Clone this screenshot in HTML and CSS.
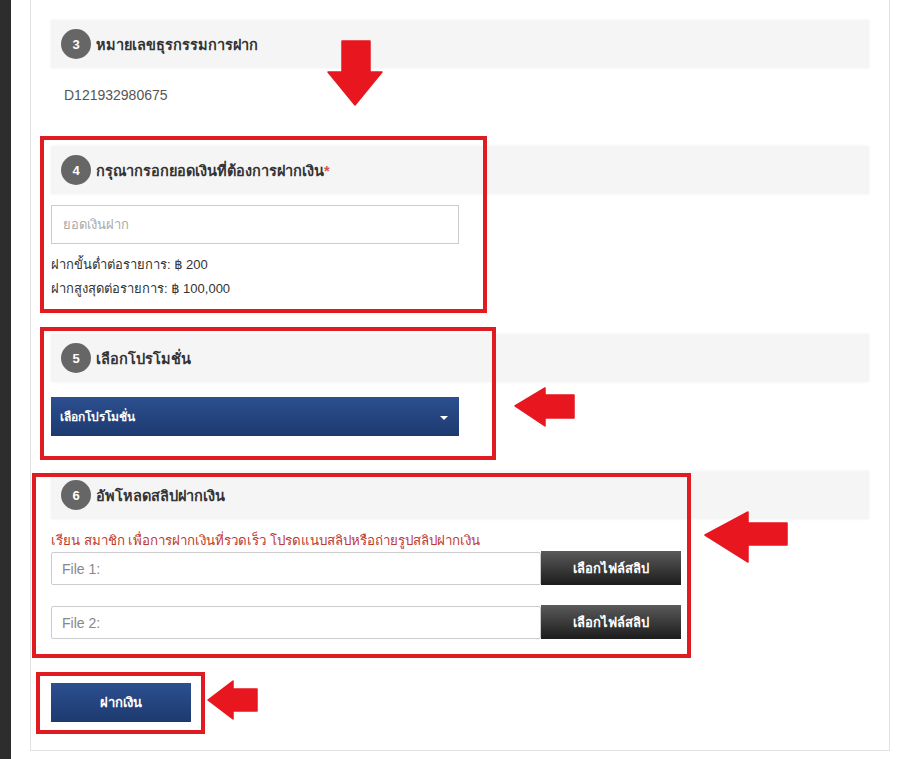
FILE: index.html
```html
<!DOCTYPE html>
<html lang="th">
<head>
<meta charset="utf-8">
<title>ฝากเงิน</title>
<link rel="stylesheet" href="styles.css">
</head>
<body>
<div class="page">
  <div class="sidebar"></div>
  <div class="main">
    <div class="card">
      <section class="sec sec3">
        <div class="sec-head"><span class="badge">3</span><span class="sec-title">หมายเลขธุรกรรมการฝาก</span></div>
        <div class="txn">D121932980675</div>
      </section>

      <section class="sec sec4">
        <div class="sec-head"><span class="badge">4</span><span class="sec-title">กรุณากรอกยอดเงินที่ต้องการฝากเงิน<span class="req">*</span></span></div>
        <div class="amount-input">ยอดเงินฝาก</div>
        <div class="limits">
          <div>ฝากขั้นต่ำต่อรายการ: ฿ 200</div>
          <div>ฝากสูงสุดต่อรายการ: ฿ 100,000</div>
        </div>
      </section>

      <section class="sec sec5">
        <div class="sec-head"><span class="badge">5</span><span class="sec-title">เลือกโปรโมชั่น</span></div>
        <div class="select"><span>เลือกโปรโมชั่น</span><span class="caret"></span></div>
      </section>

      <section class="sec sec6">
        <div class="sec-head"><span class="badge">6</span><span class="sec-title">อัพโหลดสลิปฝากเงิน</span></div>
        <div class="notice">เรียน สมาชิก เพื่อการฝากเงินที่รวดเร็ว โปรดแนบสลิปหรือถ่ายรูปสลิปฝากเงิน</div>
        <div class="file-row"><div class="file-field">File 1:</div><div class="file-btn">เลือกไฟล์สลิป</div></div>
        <div class="file-row row2"><div class="file-field">File 2:</div><div class="file-btn">เลือกไฟล์สลิป</div></div>
      </section>

      <div class="submit">ฝากเงิน</div>
    </div>
  </div>

  <div class="mark mark4"></div>
  <div class="mark mark5"></div>
  <div class="mark mark6"></div>
  <div class="mark mark-submit"></div>
  <svg class="arrows" width="901" height="759" viewBox="0 0 901 759">
    <g fill="#e8161f" stroke="#e8161f" stroke-width="1.5" stroke-linejoin="round">
      <polygon points="342,41 370,41 370,72 382,72 355,105 328,72 342,72"/>
      <polygon points="515,406 545,388 545,395 574,395 574,418 545,418 545,426"/>
      <polygon points="705,535 748,512 748,523 787,523 787,545 748,545 748,562"/>
      <polygon points="208,700 233,681 233,689 257,689 257,711 233,711 233,719"/>
    </g>
  </svg>
</div>
</body>
</html>
```

FILE: styles.css
```css
* { box-sizing: border-box; }
html, body { margin: 0; padding: 0; background: #fff; }
body {
  font-family: "Liberation Sans", "DejaVu Sans", sans-serif;
  font-size: 13px;
  color: #333;
}
.page {
  position: relative;
  display: flex;
  width: 901px;
  height: 759px;
  overflow: hidden;
}
.sidebar {
  width: 11px;
  background: #2d2d2d;
  flex: none;
}
.main {
  flex: 1;
  padding-left: 19px;
  padding-right: 11px;
}
.card {
  height: 751px;
  border: 1px solid #e2e2e2;
  border-top: none;
  padding: 20px 20px 0 20px;
  background: #fff;
}
.sec-head {
  height: 48px;
  background: #f5f5f5;
  box-shadow: 0 0 3px rgba(0,0,0,0.06);
  display: flex;
  align-items: center;
  padding-left: 10px;
}
.badge {
  width: 30px;
  height: 30px;
  border-radius: 50%;
  background: #666;
  color: #fff;
  font-weight: bold;
  font-size: 13px;
  display: flex;
  align-items: center;
  justify-content: center;
  margin-right: 5px;
}
.sec-title {
  font-weight: bold;
  font-size: 14.5px;
  color: #333;
}
.req { color: #d9534f; }
.txn {
  margin: 17px 0 0 13px;
  line-height: 20px;
  font-size: 14px;
  color: #555;
}
.sec4 { margin-top: 41px; }
.amount-input {
  margin-top: 11px;
  width: 408px;
  height: 39px;
  border: 1px solid #ccc;
  padding-left: 11px;
  display: flex;
  align-items: center;
  color: #aaa;
  font-size: 13px;
}
.limits {
  margin-top: 9px;
  line-height: 24px;
  color: #333;
}
.sec5 { margin-top: 33px; }
.select {
  margin-top: 15px;
  width: 408px;
  height: 39px;
  background: linear-gradient(#2c4f8f, #1d3a70);
  color: #fff;
  font-weight: bold;
  font-size: 12px;
  display: flex;
  align-items: center;
  justify-content: space-between;
  padding: 0 11px 0 9px;
}
.caret {
  width: 0;
  height: 0;
  border-left: 4px solid transparent;
  border-right: 4px solid transparent;
  border-top: 4px solid #fff;
  margin-top: 2px;
}
.sec6 { margin-top: 35px; }
.notice {
  margin-top: 12px;
  line-height: 20px;
  font-size: 13.3px;
  color: #c0392b;
}
.file-row {
  display: flex;
  height: 34px;
}
.row2 { margin-top: 20px; }
.file-field {
  width: 490px;
  height: 33px;
  margin-top: 1px;
  border: 1px solid #ccc;
  border-radius: 2px;
  padding-left: 10px;
  display: flex;
  align-items: center;
  color: #888;
  font-size: 14px;
}
.file-btn {
  width: 140px;
  height: 34px;
  background: linear-gradient(#5a5a5a, #1c1c1c);
  color: #fff;
  font-weight: bold;
  font-size: 13px;
  display: flex;
  align-items: center;
  justify-content: center;
}
.submit {
  margin-top: 44px;
  width: 140px;
  height: 39px;
  background: linear-gradient(#2c4f8f, #1d3a70);
  color: #fff;
  font-weight: bold;
  font-size: 13px;
  display: flex;
  align-items: center;
  justify-content: center;
}
.mark {
  position: absolute;
  border: 4px solid #e11b22;
  pointer-events: none;
}
.mark4 { left: 40px; top: 136px; width: 447px; height: 177px; }
.mark5 { left: 40px; top: 327px; width: 456px; height: 133px; }
.mark6 { left: 32px; top: 473px; width: 659px; height: 185px; }
.mark-submit { left: 36px; top: 672px; width: 169px; height: 62px; }
.arrows {
  position: absolute;
  left: 0;
  top: 0;
  pointer-events: none;
}
```
